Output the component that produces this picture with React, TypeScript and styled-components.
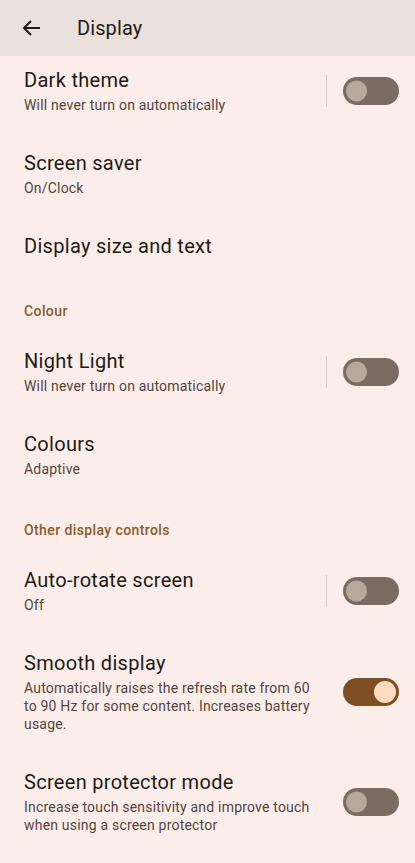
import * as React from 'react';
import styled, { createGlobalStyle } from 'styled-components';

const colors = {
	header: '#ebe1dc',
	surface: '#fbeeea',
	title: '#211a16',
	subtitle: '#53443d',
	category: '#8a5a2d',
	divider: '#d8cac3',
	trackOff: '#7b6c63',
	thumbOff: '#b7a89e',
	trackOn: '#7f4f24',
	thumbOn: '#ffdcc1',
};

const GlobalStyle = createGlobalStyle`
	html, body {
		margin: 0;
		padding: 0;
		background: ${colors.surface};
	}
	body {
		font-family: Roboto, "Noto Sans", sans-serif;
		-webkit-font-smoothing: antialiased;
	}
`;

const Screen = styled.div`
	width: 415px;
	height: 863px;
	overflow: hidden;
	display: flex;
	flex-direction: column;
	background: ${colors.surface};
`;

const TopBar = styled.header`
	position: relative;
	z-index: 1;
	height: 56px;
	flex-shrink: 0;
	display: flex;
	align-items: center;
	background: ${colors.header};
`;

const BackButton = styled.button`
	width: 56px;
	height: 56px;
	border: 0;
	padding: 0 0 0 8px;
	background: transparent;
	display: flex;
	align-items: center;
	justify-content: center;
	color: ${colors.title};
`;

const TopTitle = styled.h1`
	margin: 0 0 0 21px;
	font-size: 20px;
	font-weight: 400;
	letter-spacing: 0.1px;
	color: ${colors.title};
`;

// the list is scrolled up a little under the top bar
const List = styled.div`
	margin-top: -7px;
	display: flex;
	flex-direction: column;
`;

const Row = styled.div`
	display: flex;
	align-items: center;
	padding: 18px 16px 18px 24px;
`;

const Texts = styled.div`
	flex: 1;
	min-width: 0;
`;

const Title = styled.div`
	font-size: 20px;
	line-height: 26px;
	letter-spacing: 0.3px;
	color: ${colors.title};
`;

const Summary = styled.div`
	margin-top: 3px;
	font-size: 14px;
	line-height: 18px;
	letter-spacing: 0.2px;
	color: ${colors.subtitle};
	padding-right: 24px;
`;

const Divider = styled.div`
	width: 1px;
	height: 32px;
	background: ${colors.divider};
	margin: 0 16px 0 10px;
`;

const Category = styled.div`
	padding: 24px 24px 9px;
	font-size: 14px;
	line-height: 20px;
	font-weight: 500;
	letter-spacing: 0.4px;
	color: ${colors.category};
`;

const Track = styled.div<{ $on: boolean }>`
	position: relative;
	width: 56px;
	height: 28px;
	flex-shrink: 0;
	border-radius: 14px;
	background: ${(p) => (p.$on ? colors.trackOn : colors.trackOff)};
`;

const Thumb = styled.div<{ $on: boolean }>`
	position: absolute;
	top: 50%;
	transform: translateY(-50%);
	width: ${(p) => (p.$on ? 22 : 21)}px;
	height: ${(p) => (p.$on ? 22 : 21)}px;
	border-radius: 50%;
	left: ${(p) => (p.$on ? 31 : 3)}px;
	background: ${(p) => (p.$on ? colors.thumbOn : colors.thumbOff)};
`;

const Switch: React.FC<{ on?: boolean }> = ({ on = false }) => (
	<Track $on={on}>
		<Thumb $on={on} />
	</Track>
);

interface PrefProps {
	title: string;
	summary?: string;
	toggle?: boolean;
	on?: boolean;
	divider?: boolean;
}

const Pref: React.FC<PrefProps> = ({ title, summary, toggle, on, divider }) => (
	<Row>
		<Texts>
			<Title>{title}</Title>
			{summary && <Summary>{summary}</Summary>}
		</Texts>
		{divider && <Divider />}
		{toggle && <Switch on={on} />}
	</Row>
);

const BackArrow = () => (
	<svg width="24" height="24" viewBox="0 0 24 24" fill="none">
		<path d="M20 12H4.5M11 5l-7 7 7 7" stroke="currentColor" strokeWidth="2" />
	</svg>
);

export default function App() {
	return (
		<Screen>
			<GlobalStyle />
			<TopBar>
				<BackButton aria-label="Back">
					<BackArrow />
				</BackButton>
				<TopTitle>Display</TopTitle>
			</TopBar>
			<List>
				<Pref title="Dark theme" summary="Will never turn on automatically" toggle divider />
				<Pref title="Screen saver" summary="On/Clock" />
				<Pref title="Display size and text" />
				<Category>Colour</Category>
				<Pref title="Night Light" summary="Will never turn on automatically" toggle divider />
				<Pref title="Colours" summary="Adaptive" />
				<Category>Other display controls</Category>
				<Pref title="Auto-rotate screen" summary="Off" toggle divider />
				<Pref
					title="Smooth display"
					summary="Automatically raises the refresh rate from 60 to 90 Hz for some content. Increases battery usage."
					toggle
					on
				/>
				<Pref
					title="Screen protector mode"
					summary="Increase touch sensitivity and improve touch when using a screen protector"
					toggle
				/>
			</List>
		</Screen>
	);
}
